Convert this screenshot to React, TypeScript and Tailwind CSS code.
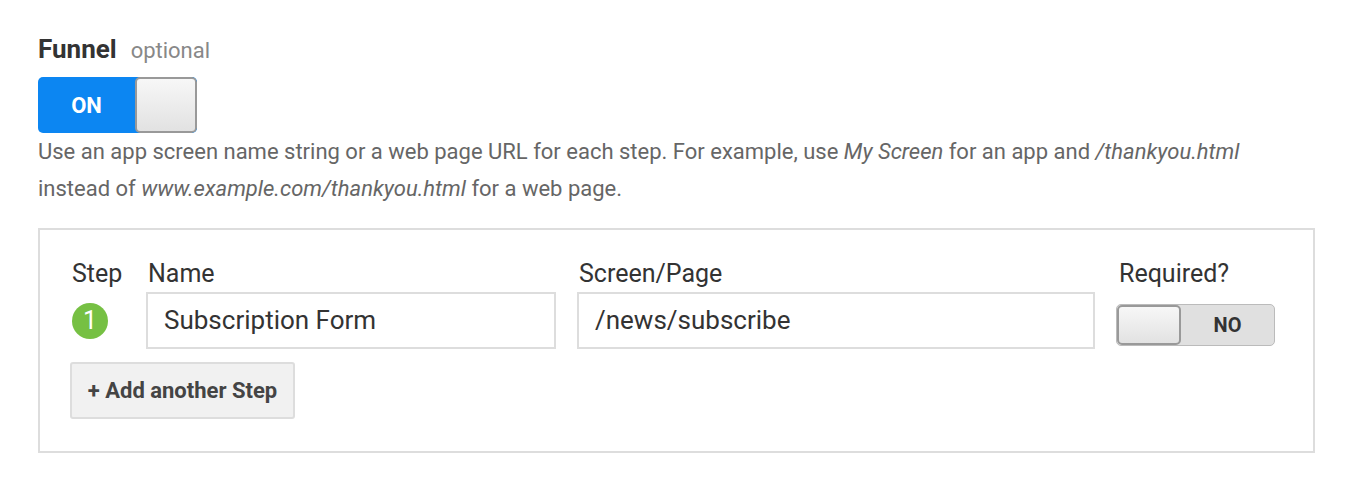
import React from "react"

export default function App() {
  return (
    <div className="min-h-[492px] bg-white px-[38px] pt-[33px] font-['Roboto','Liberation_Sans',sans-serif] text-[#333]">
      <div className="flex items-baseline gap-[14px] leading-[32px]">
        <span className="text-[26px] font-bold text-[#333]">Funnel</span>
        <span className="text-[22px] text-[#888]">optional</span>
      </div>

      {/* ON toggle */}
      <div className="mt-[10px] flex h-[56px] w-[159px] overflow-hidden rounded-[5px] bg-[#0c86f2]">
        <div className="flex w-[97px] items-center justify-center text-[22px] font-bold text-white">ON</div>
        <div className="flex-1 rounded-[5px] border-2 border-[#999] bg-gradient-to-b from-[#f7f7f7] to-[#e2e2e2]" />
      </div>

      <p className="text-[22px] leading-[37px] text-[#666]">
        Use an app screen name string or a web page URL for each step. For example, use <i>My Screen</i> for an app and{" "}
        <i>/thankyou.html</i>
        <br />
        instead of <i>www.example.com/thankyou.html</i> for a web page.
      </p>

      <div className="mt-[21px] w-[1277px] border-2 border-[#ddd] pb-[32px] pl-[32px] pr-[38px] pt-[30px]">
        <div className="grid grid-cols-[53px_410px_518px_159px] gap-x-[21px]">
          <div className="text-[25px] leading-[28px] text-[#333]">Step</div>
          <div className="pl-[2px] text-[25px] leading-[28px] text-[#333]">Name</div>
          <div className="pl-[2px] text-[25px] leading-[28px] text-[#333]">Screen/Page</div>
          <div className="pl-[3px] text-[25px] leading-[28px] text-[#333]">Required?</div>

          <div className="mt-[4px] flex h-[57px] items-center">
            <div className="flex h-[36px] w-[36px] items-center justify-center rounded-full bg-[#76c043] text-[25px] text-white">1</div>
          </div>
          <div className="mt-[4px] flex h-[57px] items-center border-2 border-[#ddd] px-[16px] text-[26px] text-[#333]">
            Subscription Form
          </div>
          <div className="mt-[4px] flex h-[57px] items-center border-2 border-[#ddd] px-[16px] text-[26px] text-[#333]">
            /news/subscribe
          </div>
          <div className="mt-[4px] h-[57px] pt-[12px]">
            <div className="flex h-[42px] w-[159px] overflow-hidden rounded-[5px] border border-[#bbb] bg-[#e0e0e0]">
              <div className="w-[64px] rounded-[5px] border-2 border-[#999] bg-gradient-to-b from-[#f7f7f7] to-[#e2e2e2]" />
              <div className="flex flex-1 items-center justify-center text-[20px] font-bold text-[#333]">NO</div>
            </div>
          </div>
        </div>

        <button className="ml-[-2px] mt-[13px] flex h-[57px] w-[225px] items-center justify-center rounded-[3px] border-2 border-[#ddd] bg-[#f1f1f1] text-[22px] font-bold text-[#444]">
          + Add another Step
        </button>
      </div>
    </div>
  )
}
